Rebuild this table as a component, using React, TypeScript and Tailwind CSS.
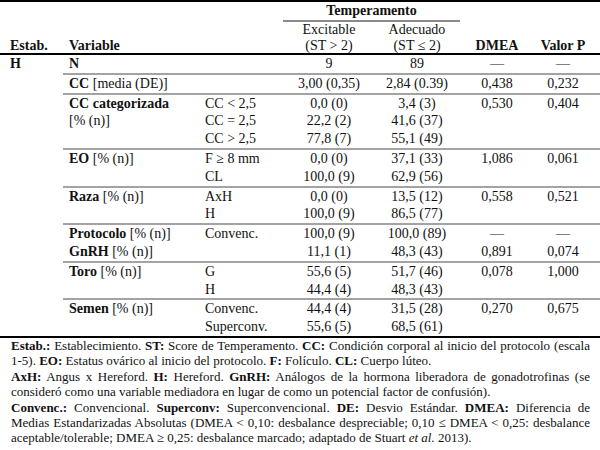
import React from 'react';

type Row = { sub?: string; exc: string; adec: string; dmea?: string; p?: string };
type Group = { label: React.ReactNode; rows: Row[]; noLine?: boolean };

const groups: Group[] = [
  { label: <b>N</b>, rows: [{ exc: '9', adec: '89', dmea: '—', p: '—' }] },
  {
    label: (
      <>
        <b>CC</b> [media (DE)]
      </>
    ),
    rows: [{ exc: '3,00 (0,35)', adec: '2,84 (0.39)', dmea: '0,438', p: '0,232' }],
  },
  {
    label: (
      <>
        <b>CC categorizada</b>
        <br />
        [% (n)]
      </>
    ),
    rows: [
      { sub: 'CC < 2,5', exc: '0,0 (0)', adec: '3,4 (3)', dmea: '0,530', p: '0,404' },
      { sub: 'CC = 2,5', exc: '22,2 (2)', adec: '41,6 (37)' },
      { sub: 'CC > 2,5', exc: '77,8 (7)', adec: '55,1 (49)' },
    ],
  },
  {
    label: (
      <>
        <b>EO</b> [% (n)]
      </>
    ),
    rows: [
      { sub: 'F ≥ 8 mm', exc: '0,0 (0)', adec: '37,1 (33)', dmea: '1,086', p: '0,061' },
      { sub: 'CL', exc: '100,0 (9)', adec: '62,9 (56)' },
    ],
  },
  {
    label: (
      <>
        <b>Raza</b> [% (n)]
      </>
    ),
    rows: [
      { sub: 'AxH', exc: '0,0 (0)', adec: '13,5 (12)', dmea: '0,558', p: '0,521' },
      { sub: 'H', exc: '100,0 (9)', adec: '86,5 (77)' },
    ],
  },
  {
    label: (
      <>
        <b>Protocolo</b> [% (n)]
      </>
    ),
    noLine: true,
    rows: [{ sub: 'Convenc.', exc: '100,0 (9)', adec: '100,0 (89)', dmea: '—', p: '—' }],
  },
  {
    label: (
      <>
        <b>GnRH</b> [% (n)]
      </>
    ),
    rows: [{ exc: '11,1 (1)', adec: '48,3 (43)', dmea: '0,891', p: '0,074' }],
  },
  {
    label: (
      <>
        <b>Toro</b> [% (n)]
      </>
    ),
    rows: [
      { sub: 'G', exc: '55,6 (5)', adec: '51,7 (46)', dmea: '0,078', p: '1,000' },
      { sub: 'H', exc: '44,4 (4)', adec: '48,3 (43)' },
    ],
  },
  {
    label: (
      <>
        <b>Semen</b> [% (n)]
      </>
    ),
    noLine: true,
    rows: [
      { sub: 'Convenc.', exc: '44,4 (4)', adec: '31,5 (28)', dmea: '0,270', p: '0,675' },
      { sub: 'Superconv.', exc: '55,6 (5)', adec: '68,5 (61)' },
    ],
  },
];

const Line = ({ children, last }: { children: React.ReactNode; last?: boolean }) => (
  <div className={last ? 'text-left' : 'text-justify [text-align-last:justify]'}>{children}</div>
);

export default function App() {
  return (
    <div className="w-[600px] h-[450px] overflow-hidden bg-white text-[#111] font-[family-name:Liberation_Serif,Times_New_Roman,serif]">
      {/* Header */}
      <div className="flex items-end border-t-2 border-b-2 border-black text-[14px]">
        <div className="w-[63px] pl-[10px] leading-[15px] font-bold">Estab.</div>
        <div className="w-[235px] pl-[6px] leading-[15px] font-bold">Variable</div>
        <div className="w-[176px] flex flex-col">
          <div className="-ml-[15px] w-[177px] text-center font-bold leading-[18px] border-b-2 border-[#8a8a8a]">
            Temperamento
          </div>
          <div className="flex">
            <div className="w-[62px] text-center">
              <div className="leading-[16px]">Excitable</div>
              <div className="leading-[15px]">(ST &gt; 2)</div>
            </div>
            <div className="w-[114px] text-center">
              <div className="leading-[16px]">Adecuado</div>
              <div className="leading-[15px]">(ST ≤ 2)</div>
            </div>
          </div>
        </div>
        <div className="w-[46px] text-center font-bold leading-[15px] whitespace-nowrap">DMEA</div>
        <div className="flex-1 pl-[6px] text-center font-bold leading-[15px] whitespace-nowrap">Valor P</div>
      </div>

      {/* Body */}
      <div className="flex border-b-2 border-black text-[14px]">
        <div className="w-[63px] pl-[10px] leading-[17.8px] font-bold">H</div>
        <div className="flex-1 flex flex-col">
          {groups.map((g, i) => (
            <div key={i} className={`flex ${g.noLine ? '' : 'border-b-2 border-[#a3a3a3]'}`}>
              <div className="w-[142px] pl-[6px] leading-[17.8px] whitespace-nowrap">{g.label}</div>
              <div className="flex-1 flex flex-col">
                {g.rows.map((r, j) => (
                  <div key={j} className="flex h-[17.8px] leading-[17.8px] whitespace-nowrap">
                    <div className="w-[93px]">{r.sub}</div>
                    <div className="w-[62px] text-center">{r.exc}</div>
                    <div className="w-[114px] text-center">{r.adec}</div>
                    <div className="w-[46px] text-center">{r.dmea}</div>
                    <div className="flex-1 pl-[6px] text-center">{r.p}</div>
                  </div>
                ))}
              </div>
            </div>
          ))}
        </div>
      </div>

      {/* Notes */}
      <div className="pl-[11px] pr-[10px] text-[13px] leading-[15.4px]">
        <Line>
          <b>Estab.:</b> Establecimiento. <b>ST:</b> Score de Temperamento. <b>CC:</b> Condición corporal al inicio
          del protocolo (escala
        </Line>
        <Line last>
          1-5). <b>EO:</b> Estatus ovárico al inicio del protocolo. <b>F:</b> Folículo. <b>CL:</b> Cuerpo lúteo.
        </Line>
        <Line>
          <b>AxH:</b> Angus x Hereford. <b>H:</b> Hereford. <b>GnRH:</b> Análogos de la hormona liberadora de
          gonadotrofinas (se
        </Line>
        <Line last>
          consideró como una variable mediadora en lugar de como un potencial factor de confusión).
        </Line>
        <Line>
          <b>Convenc.:</b> Convencional. <b>Superconv:</b> Superconvencional. <b>DE:</b> Desvio Estándar.{' '}
          <b>DMEA:</b> Diferencia de
        </Line>
        <Line>
          Medias Estandarizadas Absolutas (DMEA &lt; 0,10: desbalance despreciable; 0,10 ≤ DMEA &lt; 0,25:
          desbalance
        </Line>
        <Line last>
          aceptable/tolerable; DMEA ≥ 0,25: desbalance marcado; adaptado de Stuart <i>et al.</i> 2013).
        </Line>
      </div>
    </div>
  );
}
